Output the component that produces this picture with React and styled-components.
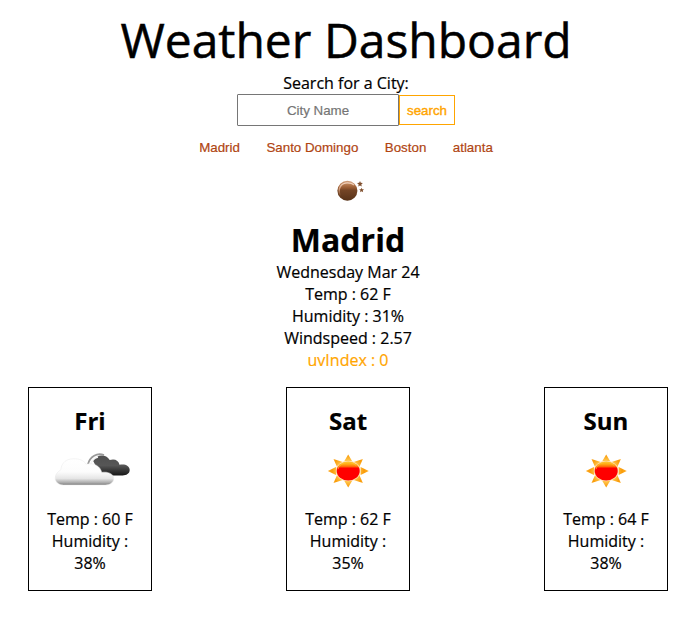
import React from "react";
import styled, { createGlobalStyle } from "styled-components";

const GlobalStyle = createGlobalStyle`
  * { box-sizing: border-box; }
  body {
    margin: 0;
    background: #fff;
    color: #000;
    font: 16px/22px "Open Sans", sans-serif;
    -webkit-text-stroke: 0.2px currentColor;
  }
`;

const Page = styled.main`
  width: 699px;
  height: 621px;
  overflow: hidden;
`;

const Header = styled.header`
  width: 692px;
  height: 163px;
  padding-top: 8px;
  display: flex;
  flex-direction: column;
  align-items: center;
`;

const Title = styled.h1`
  margin: 0;
  font-size: 48px;
  font-weight: 400;
  line-height: 64px;
  white-space: nowrap;
  -webkit-text-stroke: 0.5px currentColor;
`;

const SearchForm = styled.form`
  display: flex;
  align-items: center;
  height: 32px;
`;

const CityInput = styled.input`
  width: 162px;
  height: 32px;
  padding: 0;
  border: 1px solid #767676;
  border-radius: 1px;
  background: #fff;
  text-align: center;
  font: 13.333px "Liberation Sans", Arial, sans-serif;
  &::placeholder { color: #757575; opacity: 1; }
`;

const SearchButton = styled.button`
  width: 56px;
  height: 30px;
  padding: 0;
  border: 1px solid orange;
  background: #fff;
  color: orange;
  font: 13.333px "Liberation Sans", Arial, sans-serif;
  -webkit-text-stroke: 0.4px orange;
`;

const History = styled.nav`
  display: flex;
  gap: 26.5px;
  margin-top: 13px;
`;

const HistoryButton = styled.button`
  padding: 0;
  border: 0;
  height: 17px;
  background: none;
  color: #b04512;
  font: 13.333px "Liberation Sans", Arial, sans-serif;
`;

const Current = styled.section`
  width: 696px;
  height: 224px;
  padding-top: 13px;
  display: flex;
  flex-direction: column;
  align-items: center;
  text-align: center;
`;

const MoonIcon = styled.svg`
  width: 30px;
  height: 28px;
  margin-left: 4px;
`;

const CityName = styled.h2`
  margin: 14px 0 -1px;
  font-size: 32px;
  line-height: 44px;
`;

const Line = styled.div`
  color: ${(p) => p.$color || "inherit"};
`;

const Forecast = styled.section`
  display: flex;
  justify-content: space-between;
  width: 640px;
  margin-left: 28px;
`;

const Card = styled.article`
  width: 124px;
  height: 204px;
  padding: 16px 16px 0;
  border: 1px solid #000;
  text-align: center;
`;

const Day = styled.h3`
  margin: 0;
  font-size: 24px;
  line-height: 33px;
`;

const CardIcon = styled.svg`
  display: block;
  width: 90px;
  height: 50px;
  margin: 8px 0 13px;
`;

function Moon() {
  return (
    <MoonIcon viewBox="0 0 30 28" aria-label="clear night">
      <defs>
        <linearGradient id="moon" x1="0" y1="0" x2="0" y2="1">
          <stop offset="0" stopColor="#d3a27f" />
          <stop offset=".22" stopColor="#b17449" />
          <stop offset=".38" stopColor="#92562f" />
          <stop offset=".48" stopColor="#744526" />
          <stop offset="1" stopColor="#573218" />
        </linearGradient>
        <linearGradient id="moonRim" x1="0" y1="0" x2="0" y2="1">
          <stop offset="0" stopColor="#f3d4bf" />
          <stop offset=".55" stopColor="#c99370" />
          <stop offset="1" stopColor="#bd825b" stopOpacity="0" />
        </linearGradient>
      </defs>
      <circle cx="12.4" cy="14.7" r="10" fill="url(#moon)" />
      <path d="M5.3 20C1.8 11.5 7 6.9 12.5 6.9c3.4 0 5 .6 6.5 2.1" fill="none" stroke="url(#moonRim)" strokeWidth="1.4" />
      <path d="m25 5 .8 1.8 2.1.1-1.6 1.5.5 2.1-1.8-1.1-1.8 1.1.5-2.1-1.7-1.5 2.2-.1Zm1.6 6.7.7 1.5 1.7.1-1.2 1.1.3 1.8-1.5-.9-1.5.9.3-1.8-1.2-1.1 1.7-.1Z" fill="#80502f" />
    </MoonIcon>
  );
}

function Sun() {
  return (
    <CardIcon viewBox="0 0 90 50" aria-label="sunny">
      <defs>
        <radialGradient id="rays" gradientUnits="userSpaceOnUse" cx="45" cy="26" r="20">
          <stop offset=".55" stopColor="#ffc247" />
          <stop offset=".8" stopColor="#f99b08" />
          <stop offset="1" stopColor="#ffae28" />
        </radialGradient>
        <linearGradient id="shine" x1="0" y1="0" x2="0" y2="1">
          <stop offset="0" stopColor="#ffc02c" />
          <stop offset=".16" stopColor="#ffa010" />
          <stop offset=".27" stopColor="#ff6508" />
          <stop offset=".35" stopColor="#f00" />
          <stop offset="1" stopColor="#f00" />
        </linearGradient>
      </defs>
      <path d="m45.2 9.5 4 6.8h-8Zm0 33-4-6.8h8ZM24.8 26l8.2-4v8Zm41 0-8.2-4v8ZM30.5 14l9.3 3-5.6 5.2Zm29.4 0-9.3 3 5.6 5.2ZM30.5 38l9.3-3-5.6-5.2Zm29.4 0-9.3-3 5.6-5.2Z" fill="url(#rays)" />
      <ellipse cx="45.2" cy="26" rx="12.4" ry="10.3" fill="#ffdda6" />
      <ellipse cx="45.2" cy="26" rx="11.5" ry="9.4" fill="url(#shine)" />
      <path d="M35 24.2c1.2-4.8 5.2-6.6 10-6.6 3.6 0 6.6 1 8.4 3.2" fill="none" stroke="#ffc52e" strokeWidth="1" opacity=".75" />
    </CardIcon>
  );
}

function Clouds() {
  return (
    <CardIcon viewBox="0 0 90 50" aria-label="cloudy">
      <defs>
        <linearGradient id="cloud" x1="0" y1="0" x2="0" y2="1">
          <stop offset="0" stopColor="#fff" />
          <stop offset=".5" stopColor="#fcfcfc" />
          <stop offset=".75" stopColor="#e6e6e6" />
          <stop offset=".92" stopColor="#a8a8a8" />
          <stop offset="1" stopColor="#7c7c7c" />
        </linearGradient>
        <linearGradient id="darkCloud" x1="0" y1="0" x2="0" y2="1">
          <stop offset="0" stopColor="#505050" />
          <stop offset=".5" stopColor="#565656" />
          <stop offset="1" stopColor="#171717" />
        </linearGradient>
      </defs>
      <g transform="translate(4.7 2)">
        <path d="M43.5 14c3-6.5 12.5-7.5 16.5-1 5-1.6 9 .4 9.8 4.8 5-1.2 10.2.6 10.2 5.2 0 3.7-3.5 5.4-7 5.4H51Z" fill="url(#darkCloud)" />
        <path d="M38.3 17.2C40.3 9.2 47.5 5.6 54.3 8.1" fill="none" stroke="#999" strokeWidth="1.8" />
        <path d="M40.8 18c1.3-5.5 4.2-7.3 7.5-8" fill="none" stroke="#f5f5f5" strokeWidth="1.3" />
        <path d="M14 38c-5 0-8.5-3-8.5-7 0-4 3-6.5 5.6-8.2C12 15 17 12 23.5 11.8c6-.2 10.3 1.2 13 5.5 7.4-2.3 14.4 2.2 15.5 8 6.5-.8 12 1.4 12 6.3 0 4.2-4 6.4-8.5 6.4Z" fill="url(#cloud)" stroke="#e8e8e8" strokeWidth=".5" />
      </g>
    </CardIcon>
  );
}

const cities = ["Madrid", "Santo Domingo", "Boston", "atlanta"];
const days = [
  { name: "Fri", temp: 60, humidity: 38, Icon: Clouds },
  { name: "Sat", temp: 62, humidity: 35, Icon: Sun },
  { name: "Sun", temp: 64, humidity: 38, Icon: Sun },
];

export default function App() {
  return (
    <Page>
      <GlobalStyle />
      <Header>
        <Title>Weather Dashboard</Title>
        <label htmlFor="city">Search for a City:</label>
        <SearchForm onSubmit={(e) => e.preventDefault()}>
          <CityInput id="city" placeholder="City Name" />
          <SearchButton>search</SearchButton>
        </SearchForm>
        <History>
          {cities.map((city) => <HistoryButton key={city}>{city}</HistoryButton>)}
        </History>
      </Header>
      <Current>
        <Moon />
        <CityName>Madrid</CityName>
        <Line>Wednesday Mar 24</Line>
        <Line>Temp : 62 F</Line>
        <Line>Humidity : 31%</Line>
        <Line>Windspeed : 2.57</Line>
        <Line $color="orange">uvIndex : 0</Line>
      </Current>
      <Forecast>
        {days.map(({ name, temp, humidity, Icon }) => (
          <Card key={name}>
            <Day>{name}</Day>
            <Icon />
            <Line>Temp : {temp} F</Line>
            <Line>Humidity : {humidity}%</Line>
          </Card>
        ))}
      </Forecast>
    </Page>
  );
}
